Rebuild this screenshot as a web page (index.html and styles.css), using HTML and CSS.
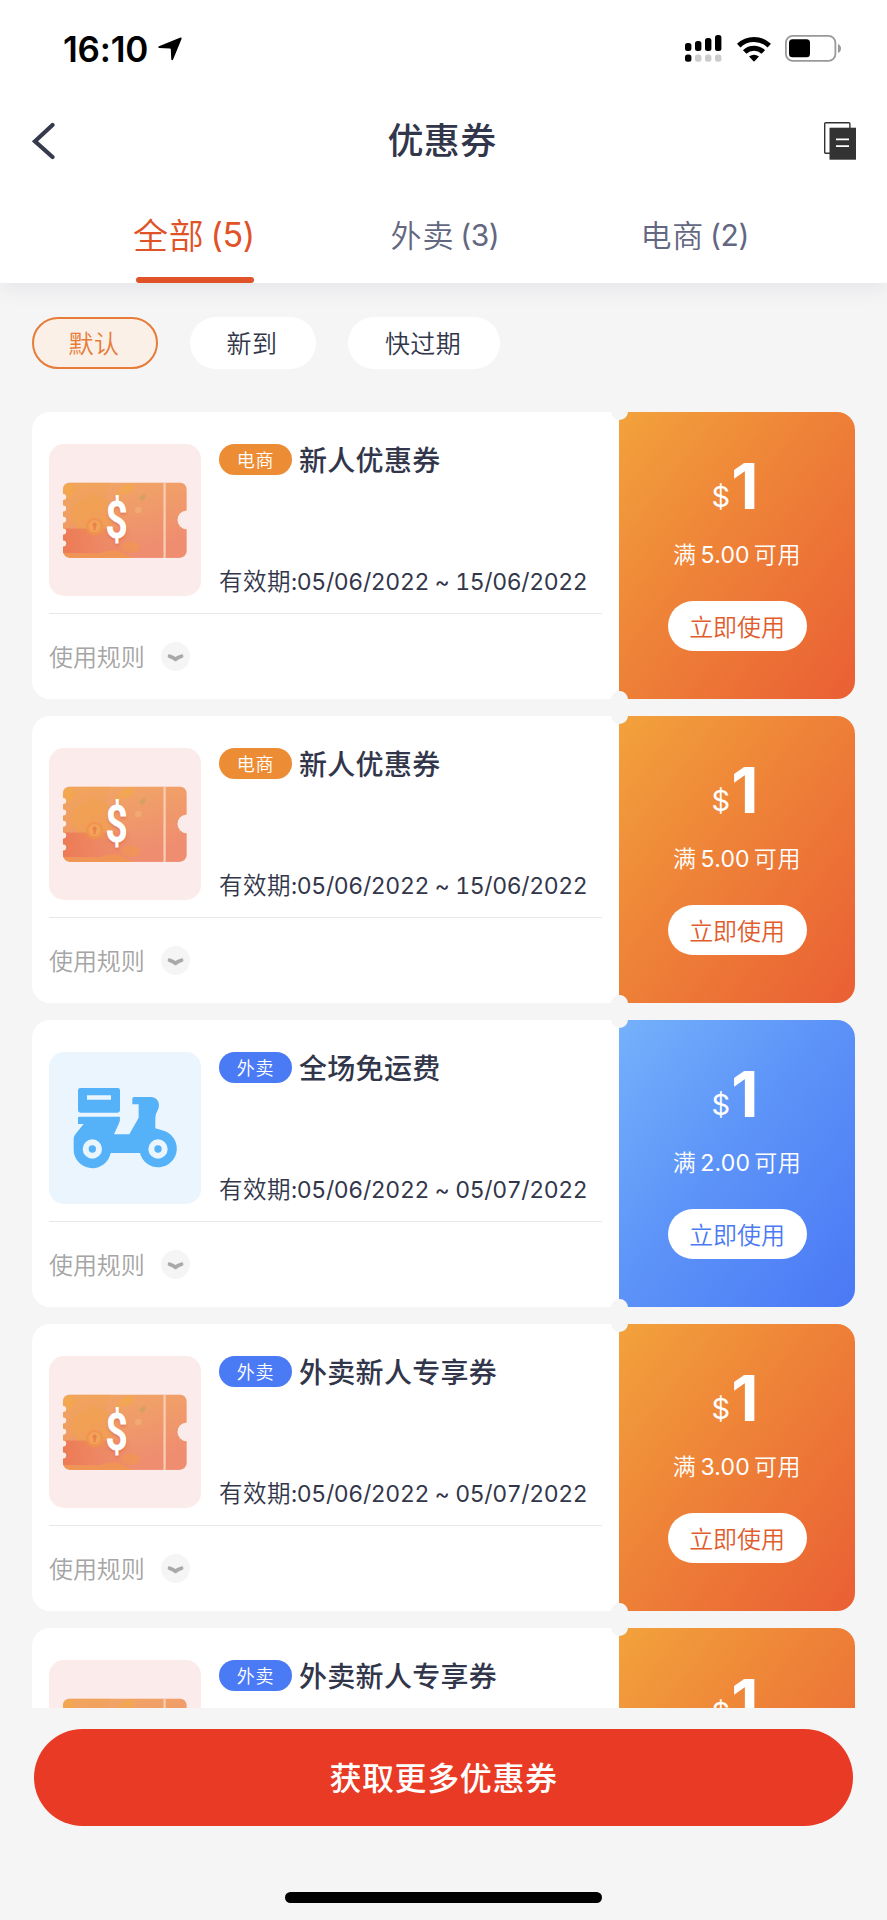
FILE: index.html
```html
<!DOCTYPE html>
<html lang="zh-CN">
<head>
<meta charset="utf-8">
<title>优惠券</title>
<link rel="stylesheet" href="styles.css">
</head>
<body>
<svg class="defs" width="0" height="0" aria-hidden="true">
  <defs>
    <linearGradient id="ticketFill" x1="0" y1="0" x2="0.35" y2="1">
      <stop offset="0" stop-color="#f2a865"/><stop offset="1" stop-color="#ee8d70"/>
    </linearGradient>
    <linearGradient id="ticketBand" x1="0" y1="0" x2="1" y2="0">
      <stop offset="0" stop-color="#ec7a55"/><stop offset="1" stop-color="#ee8463" stop-opacity="0.2"/>
    </linearGradient>
    <clipPath id="ticketClip"><rect x="131" y="246" width="371" height="226" rx="22"/></clipPath>
    <symbol id="ticket" viewBox="90 131 454 455">
      <g clip-path="url(#ticketClip)">
        <rect x="131" y="246" width="371" height="226" fill="url(#ticketFill)"/>
        <path d="M131 246h142l-30 80-112 60z" fill="#f0a050" opacity="0.35"/>
        <path d="M160 335q5-30 40-42 5-20 20-12 10 10 25 8 32 10 30 46v70H190q-34-30-30-70z" fill="#f2a24c" opacity="0.6"/>
        <rect x="131" y="384" width="205" height="74" fill="url(#ticketBand)"/>
        <path d="M131 250q35-2 36 20-4 20-36 24zM285 290q12-38 58-42 10 26-20 32-20 2-38 10z" fill="#f2a945" opacity="0.55"/>
        <circle cx="226" cy="377" r="26" fill="#f0954e"/>
        <circle cx="226" cy="377" r="18" fill="#f2a25a"/>
        <path d="M226 366a7 7 0 0 1 4 12l-2 12h-4l-2-12a7 7 0 0 1 4-12z" fill="#e98246"/>
        <ellipse cx="334" cy="440" rx="28" ry="17" fill="#f0974f" opacity="0.6"/>
        <path d="M131 458h110q30-12 58-8l40 22H131z" fill="#f0964f" opacity="0.8"/>
        <path d="M360 292l14-12 6 8-12 14z" fill="#b5a45c" opacity="0.5"/>
        <circle cx="357" cy="328" r="10" fill="#f3b071" opacity="0.7"/>
        <rect x="432" y="246" width="7" height="226" fill="#f9cbb0"/>
      </g>
      <g fill="#fbeceb">
        <circle cx="132" cy="290" r="9"/><circle cx="132" cy="324" r="9"/><circle cx="132" cy="358" r="9"/>
        <circle cx="132" cy="393" r="9"/><circle cx="132" cy="429" r="9"/><circle cx="502" cy="358" r="28"/>
      </g>
    </symbol>
    <symbol id="scooter" viewBox="58 126 456 456">
      <g fill="#55b2f9">
        <path fill-rule="evenodd" d="M152 234h112q7 0 7 7v60q0 7-7 7H152q-7 0-7-7v-60q0-7 7-7zM172 256v13h72v-13z"/>
        <path d="M149 320h122q1 12-4 22l-14 31h46l28-50v-40h-19v-17q0-5 5-5h50q22 0 25 24 0 8-4 16-7 12-7 22v32l20 6a56 56 0 1 1-66 68h-88a56 56 0 0 1-111-12v-30q0-10 8-18l22-27h-17v-18q0-4 4-4z"/>
      </g>
      <g fill="none" stroke="#eaf5fe" stroke-width="18"><circle cx="188" cy="417" r="20"/><circle cx="385" cy="417" r="20"/></g>
    </symbol>
    <symbol id="more" viewBox="0 0 29 29">
      <circle cx="14.5" cy="14.5" r="14.5" fill="#f5f5f5"/>
      <path d="M8.500 14.300q4 1.200 6 3 2-1.800 6-3" fill="none" stroke="#a9a9a9" stroke-width="3.800" stroke-linecap="round" stroke-linejoin="round"/>
    </symbol>
  </defs>
</svg>

<header class="top">
  <div class="status">
    <span class="time">16:10</span>
    <svg class="loc" viewBox="0 0 24 24"><path d="M22.500 .6Q24 .2 23.500 2L15.300 22Q14.500 24 13.300 22.800L12.800 12.200Q12.700 11.500 12 11.500L1.200 11Q-.6 10.300 1 9.200z"/></svg>
    <svg class="signal" viewBox="0 0 37 27">
      <rect x="0" y="8" width="6.400" height="8" rx="2.500"/><rect x="10" y="6" width="6.400" height="10" rx="2.500"/><rect x="20" y="3" width="6.400" height="13" rx="2.500"/><rect x="30" y="0" width="6.400" height="16" rx="2.500"/>
      <rect x="0" y="19.500" width="6.400" height="7.200" rx="2.500"/>
      <g fill="#ccc"><rect x="10" y="19.500" width="6.400" height="7.200" rx="2.500"/><rect x="20" y="19.500" width="6.400" height="7.200" rx="2.500"/><rect x="30" y="19.500" width="6.400" height="7.200" rx="2.500"/></g>
    </svg>
    <svg class="wifi" viewBox="0 0 34 26">
      <g fill="none" stroke="#000" stroke-width="5"><path d="M1.700 9.600a22 22 0 0 1 30.600 0"/><path d="M7.700 16a13.400 13.400 0 0 1 18.600 0"/></g>
      <path d="M12 20.600q5-3.800 10 0L17 25.800z"/>
    </svg>
    <svg class="battery" viewBox="0 0 57 27">
      <rect x=".9" y=".9" width="49.500" height="25" rx="7" fill="none" stroke="#999" stroke-width="1.800"/>
      <rect x="4" y="4.300" width="21" height="18" rx="3.500"/><path d="M53 9q3 1.500 3 4.500t-3 4.500z" fill="#999"/>
    </svg>
  </div>
  <nav class="nav">
    <svg class="back" viewBox="0 0 24 38"><path d="M20.500 3L3 19.300l17.500 15.700" fill="none" stroke="#353a4c" stroke-width="4.200" stroke-linecap="round" stroke-linejoin="miter"/></svg>
    <h1 class="title">优惠券</h1>
    <svg class="doc" viewBox="0 0 32 38"><rect x=".7" y=".7" width="25.200" height="30.500" rx="1" fill="#fff" stroke="#333" stroke-width="1.400"/><rect x="5.500" y="5.700" width="26.500" height="32" fill="#333"/><path d="M12 17.300h13M12 24.200h13" stroke="#fff" stroke-width="1.800"/></svg>
  </nav>
  <div class="tabs">
    <div class="tab tab-on">全部<span class="count">(5)</span></div>
    <div class="tab tab-mid">外卖<span class="count">(3)</span></div>
    <div class="tab">电商<span class="count">(2)</span></div>
  </div>
</header>

<div class="chips">
  <span class="chip chip-on">默认</span><span class="chip">新到</span><span class="chip chip-wide">快过期</span>
</div>

<main class="list">
  <article class="card">
    <div class="info">
      <div class="main">
        <div class="thumb"><svg viewBox="0 0 152 152"><use href="#ticket"/></svg><span class="coin">$</span></div>
        <div class="desc"><div class="head"><span class="tag">电商</span><h2 class="name">新人优惠券</h2></div><div class="date">有效期<span class="num">:05/06/2022 ~ 15/06/2022</span></div></div>
      </div>
      <div class="rules">使用规则<svg class="more"><use href="#more"/></svg></div>
    </div>
    <div class="offer"><div class="price"><small>$</small>1</div><div class="min">满<span class="amt">5.00</span>可用</div><span class="use">立即使用</span></div>
  </article>
  <article class="card">
    <div class="info">
      <div class="main">
        <div class="thumb"><svg viewBox="0 0 152 152"><use href="#ticket"/></svg><span class="coin">$</span></div>
        <div class="desc"><div class="head"><span class="tag">电商</span><h2 class="name">新人优惠券</h2></div><div class="date">有效期<span class="num">:05/06/2022 ~ 15/06/2022</span></div></div>
      </div>
      <div class="rules">使用规则<svg class="more"><use href="#more"/></svg></div>
    </div>
    <div class="offer"><div class="price"><small>$</small>1</div><div class="min">满<span class="amt">5.00</span>可用</div><span class="use">立即使用</span></div>
  </article>
  <article class="card">
    <div class="info">
      <div class="main">
        <div class="thumb thumb-blue"><svg viewBox="0 0 152 152"><use href="#scooter"/></svg></div>
        <div class="desc"><div class="head"><span class="tag tag-blue">外卖</span><h2 class="name">全场免运费</h2></div><div class="date">有效期<span class="num">:05/06/2022 ~ 05/07/2022</span></div></div>
      </div>
      <div class="rules">使用规则<svg class="more"><use href="#more"/></svg></div>
    </div>
    <div class="offer offer-blue"><div class="price"><small>$</small>1</div><div class="min">满<span class="amt">2.00</span>可用</div><span class="use">立即使用</span></div>
  </article>
  <article class="card">
    <div class="info">
      <div class="main">
        <div class="thumb"><svg viewBox="0 0 152 152"><use href="#ticket"/></svg><span class="coin">$</span></div>
        <div class="desc"><div class="head"><span class="tag tag-blue">外卖</span><h2 class="name">外卖新人专享券</h2></div><div class="date">有效期<span class="num">:05/06/2022 ~ 05/07/2022</span></div></div>
      </div>
      <div class="rules">使用规则<svg class="more"><use href="#more"/></svg></div>
    </div>
    <div class="offer"><div class="price"><small>$</small>1</div><div class="min">满<span class="amt">3.00</span>可用</div><span class="use">立即使用</span></div>
  </article>
  <article class="card">
    <div class="info">
      <div class="main">
        <div class="thumb"><svg viewBox="0 0 152 152"><use href="#ticket"/></svg></div>
        <div class="desc"><div class="head"><span class="tag tag-blue">外卖</span><h2 class="name">外卖新人专享券</h2></div></div>
      </div>
    </div>
    <div class="offer"><div class="price"><small>$</small>1</div></div>
  </article>
</main>

<footer class="foot">
  <div class="cta">获取更多优惠券</div>
  <div class="home"></div>
</footer>
</body>
</html>
```

FILE: styles.css
```css
* { box-sizing: border-box; }
body {
  margin: 0;
  width: 887px;
  height: 1920px;
  display: flex;
  flex-direction: column;
  overflow: hidden;
  background: #f5f5f5;
  color: #32364a;
  font-family: Inter, "Noto Sans CJK SC", sans-serif;
  font-weight: 350;
}
svg { display: block; flex: none; }
.defs { position: absolute; }
h1, h2 { margin: 0; font-weight: 500; }

.top { flex: none; height: 283px; background: #fff; box-shadow: 0 4px 20px rgba(70, 75, 120, .1); }
.status { height: 97px; display: flex; align-items: center; padding: 0 45px 0 63px; color: #000; }
.time { width: 95px; font-size: 35px; font-weight: 600; letter-spacing: -.2px; white-space: nowrap; }
.loc { width: 24px; height: 24px; }
.signal { width: 37px; height: 27px; margin-left: auto; }
.wifi { width: 34px; height: 26px; margin-left: 15px; }
.battery { width: 57px; height: 27px; margin-left: 14px; }

.nav { height: 90px; display: flex; justify-content: space-between; align-items: center; padding: 0 31px 2px 32px; border-bottom: 1px solid #fdfdfd; }
.back { width: 24px; height: 38px; }
.doc { width: 32px; height: 38px; }
.title { font-size: 36px; line-height: 50px; letter-spacing: .3px; padding: 1px 0 0 4px; }

.tabs { display: flex; justify-content: space-between; height: 96px; padding: 0 138px 0 133px; }
.tab { display: flex; align-items: center; color: #63677f; font-size: 31px; letter-spacing: .8px; padding-bottom: 3px; position: relative; white-space: nowrap; }
.tab-mid { margin-right: 5px; }
.count { margin: 2px 0 0 6px; font-size: 30px; font-weight: 400; letter-spacing: -.4px; }
.tab-on { color: #e05228; font-size: 35px; }
.tab-on .count { font-size: 34px; margin-left: 6px; letter-spacing: -.5px; }
.tab-on::after { content: ""; position: absolute; left: 3px; width: 118px; bottom: 0; height: 6px; border-radius: 3px; background: #e05228; }

.chips { flex: none; display: flex; gap: 32px; padding: 34px 32px 0; height: 129px; }
.chip { width: 126px; height: 52px; border-radius: 26px; background: #fff; display: flex; align-items: center; justify-content: center; font-size: 25px; letter-spacing: .4px; padding: 0 2px 2px 0; }
.chip-wide { width: 152px; }
.chip-on { border: 2px solid #e67c38; background: #fbf0e8; color: #e67c38; }

.list { flex: none; height: 1296px; overflow: hidden; display: flex; flex-direction: column; gap: 17px; padding: 0 32px; }
.card { flex: none; height: 287.1px; display: flex; border-radius: 18px; overflow: hidden; position: relative; width: 823px; }
.card::before, .card::after { content: ""; position: absolute; left: 579px; width: 17px; height: 17px; border-radius: 50%; background: #f5f5f5; }
.card::before { top: -9px; }
.card::after { bottom: -9px; }
.info { width: 587px; background: #fff; padding: 32px 17px 0; }
.main { height: 170px; border-bottom: 1px solid #e8e8e8; display: flex; gap: 18px; }
.thumb { width: 152px; height: 152px; border-radius: 15px; background: #fbeceb; position: relative; flex: none; }
.thumb svg { width: 152px; height: 152px; }
.thumb-blue { background: #eaf5fe; }
.coin { position: absolute; left: 53px; top: 46px; width: 27px; text-align: center; line-height: 62px; color: #fff; font-family: Roboto, sans-serif; font-weight: 700; font-size: 52px; transform: scaleX(.76); text-shadow: 0 2px 3px rgba(200, 80, 50, .35); }
.desc { display: flex; flex-direction: column; justify-content: space-between; padding-bottom: 15px; }
.head { display: flex; align-items: center; gap: 7px; height: 31px; }
.tag { width: 73px; height: 31px; border-radius: 16px; background: #ec8d36; color: #fff; font-size: 18px; letter-spacing: .8px; padding-bottom: 2px; display: flex; align-items: center; justify-content: center; }
.tag-blue { background: #4b7af5; }
.name { font-size: 28px; line-height: 31px; letter-spacing: .3px; padding-top: 4px; white-space: nowrap; }
.date { font-size: 23.5px; line-height: 32px; letter-spacing: .5px; white-space: nowrap; }
.num { font-size: 23px; font-weight: 400; letter-spacing: -.37px; font-feature-settings: "tnum"; }
.rules { height: 82px; display: flex; align-items: center; gap: 16px; color: #a5a5a5; font-size: 24px; letter-spacing: -.1px; }
.more { width: 29px; height: 29px; margin-top: 2px; }

.offer { flex: 1; background: linear-gradient(128deg, #f2a23c 0%, #ee8238 45%, #ea5f34 100%); color: #fff; display: flex; flex-direction: column; align-items: center; }
.offer-blue { background: linear-gradient(128deg, #75b1fb 0%, #5d94f8 45%, #4a78f5 100%); }
.price { height: 76px; margin-top: 36px; line-height: 76px; font-size: 63px; font-weight: 700; white-space: nowrap; padding-right: 4px; }
.price small { font-size: 29px; font-weight: 400; margin-right: 1px; position: relative; top: -2px; }
.min { margin-top: 14px; height: 34px; line-height: 34px; font-size: 23px; letter-spacing: .6px; white-space: nowrap; }
.amt { margin: 0 4px; font-size: 23px; font-weight: 400; letter-spacing: .2px; }
.use { margin-top: 29px; width: 139px; height: 50px; border-radius: 25px; background: #fff; color: #e15d2c; font-size: 24px; letter-spacing: -.1px; padding-bottom: 2px; display: flex; align-items: center; justify-content: center; }
.offer-blue .use { color: #4b7af5; }

.foot { flex: 1; display: flex; flex-direction: column; align-items: center; justify-content: space-between; padding: 21px 34px 17px; }
.cta { width: 819px; height: 97px; border-radius: 49px; background: #e93a25; color: #fff; font-size: 32px; font-weight: 500; letter-spacing: .6px; padding-bottom: 4px; display: flex; align-items: center; justify-content: center; }
.home { width: 317px; height: 11px; border-radius: 6px; background: #000; }
```
